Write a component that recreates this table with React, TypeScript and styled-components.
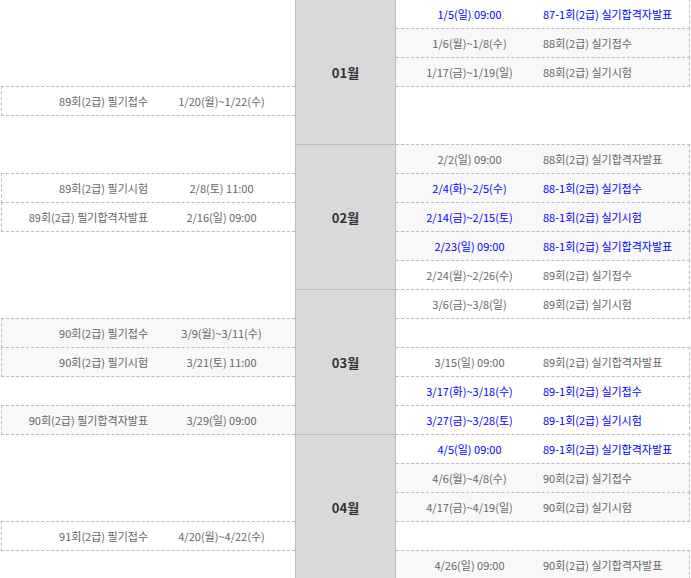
import React from 'react';
import styled, { createGlobalStyle } from 'styled-components';

const Global = createGlobalStyle`
  html, body { margin: 0; padding: 0; background: #fff; overflow: hidden; }
  body { font-family: "Noto Sans CJK KR", "Noto Sans", sans-serif; }
`;

type Side = 'left' | 'right';

interface Entry {
  row: number;
  side: Side;
  date: string;
  name: string;
}

const entries: Entry[] = [
  { row: 0, side: 'right', date: '1/5(일) 09:00', name: '87-1회(2급) 실기합격자발표' },
  { row: 1, side: 'right', date: '1/6(월)~1/8(수)', name: '88회(2급) 실기접수' },
  { row: 2, side: 'right', date: '1/17(금)~1/19(일)', name: '88회(2급) 실기시험' },
  { row: 3, side: 'left', date: '1/20(월)~1/22(수)', name: '89회(2급) 필기접수' },
  { row: 5, side: 'right', date: '2/2(일) 09:00', name: '88회(2급) 실기합격자발표' },
  { row: 6, side: 'left', date: '2/8(토) 11:00', name: '89회(2급) 필기시험' },
  { row: 6, side: 'right', date: '2/4(화)~2/5(수)', name: '88-1회(2급) 실기접수' },
  { row: 7, side: 'left', date: '2/16(일) 09:00', name: '89회(2급) 필기합격자발표' },
  { row: 7, side: 'right', date: '2/14(금)~2/15(토)', name: '88-1회(2급) 실기시험' },
  { row: 8, side: 'right', date: '2/23(일) 09:00', name: '88-1회(2급) 실기합격자발표' },
  { row: 9, side: 'right', date: '2/24(월)~2/26(수)', name: '89회(2급) 실기접수' },
  { row: 10, side: 'right', date: '3/6(금)~3/8(일)', name: '89회(2급) 실기시험' },
  { row: 11, side: 'left', date: '3/9(월)~3/11(수)', name: '90회(2급) 필기접수' },
  { row: 12, side: 'left', date: '3/21(토) 11:00', name: '90회(2급) 필기시험' },
  { row: 12, side: 'right', date: '3/15(일) 09:00', name: '89회(2급) 실기합격자발표' },
  { row: 13, side: 'right', date: '3/17(화)~3/18(수)', name: '89-1회(2급) 실기접수' },
  { row: 14, side: 'left', date: '3/29(일) 09:00', name: '90회(2급) 필기합격자발표' },
  { row: 14, side: 'right', date: '3/27(금)~3/28(토)', name: '89-1회(2급) 실기시험' },
  { row: 15, side: 'right', date: '4/5(일) 09:00', name: '89-1회(2급) 실기합격자발표' },
  { row: 16, side: 'right', date: '4/6(월)~4/8(수)', name: '90회(2급) 실기접수' },
  { row: 17, side: 'right', date: '4/17(금)~4/19(일)', name: '90회(2급) 실기시험' },
  { row: 18, side: 'left', date: '4/20(월)~4/22(수)', name: '91회(2급) 필기접수' },
  { row: 19, side: 'right', date: '4/26(일) 09:00', name: '90회(2급) 실기합격자발표' },
];

const months = ['01월', '02월', '03월', '04월'];

const Schedule = styled.div`
  display: grid;
  grid-template-columns: 294px 101px 294px;
  grid-template-rows: repeat(20, 29px);
  padding: 0 1px;
  margin-top: -1px;
`;

const MonthCell = styled.div<{ $start: number }>`
  grid-column: 2;
  grid-row: ${(p) => p.$start} / span 5;
  box-sizing: border-box;
  background: #d9d9d9;
  border-top: 1px solid #bdbdbd;
  border-left: 1px solid #bdbdbd;
  border-right: 1px solid #bdbdbd;
  display: flex;
  align-items: center;
  justify-content: center;
  font-size: 13px;
  font-weight: bold;
  color: #333;
`;

const Slot = styled.div<{ $row: number; $side: Side; $shade: boolean; $extra: boolean }>`
  grid-row: ${(p) => p.$row + 1};
  grid-column: ${(p) => (p.$side === 'left' ? 1 : 3)};
  align-self: start;
  height: 30px;
  box-sizing: border-box;
  border-top: 1px dashed #bbb;
  border-bottom: 1px dashed #bbb;
  ${(p) => (p.$side === 'left' ? 'border-left: 1px dashed #bbb;' : 'border-right: 1px dashed #bbb;')}
  background: ${(p) => (p.$shade ? '#f8f8f8' : '#fff')};
  color: ${(p) => (p.$extra ? '#0000ff' : '#666')};
  display: grid;
  grid-template-columns: ${(p) => (p.$side === 'left' ? '146px 1fr' : '147px 1fr')};
  align-items: center;
  font-size: 11px;
  line-height: 28px;
  white-space: nowrap;
`;

const DateText = styled.span`
  text-align: center;
`;

const NameText = styled.span<{ $side: Side }>`
  text-align: ${(p) => (p.$side === 'left' ? 'right' : 'left')};
`;

const isShaded = (name: string) => {
  const m = name.match(/^(\d+)/);
  return m ? parseInt(m[1], 10) % 2 === 0 : false;
};

export default function App() {
  return (
    <>
      <Global />
      <Schedule>
        {months.map((m, i) => (
          <MonthCell key={m} $start={i * 5 + 1}>
            {m}
          </MonthCell>
        ))}
        {entries.map((e) => (
          <Slot
            key={`${e.row}-${e.side}`}
            $row={e.row}
            $side={e.side}
            $shade={isShaded(e.name)}
            $extra={/^\d+-1회/.test(e.name)}
          >
            {e.side === 'left' ? (
              <>
                <NameText $side="left">{e.name}</NameText>
                <DateText>{e.date}</DateText>
              </>
            ) : (
              <>
                <DateText>{e.date}</DateText>
                <NameText $side="right">{e.name}</NameText>
              </>
            )}
          </Slot>
        ))}
      </Schedule>
    </>
  );
}
